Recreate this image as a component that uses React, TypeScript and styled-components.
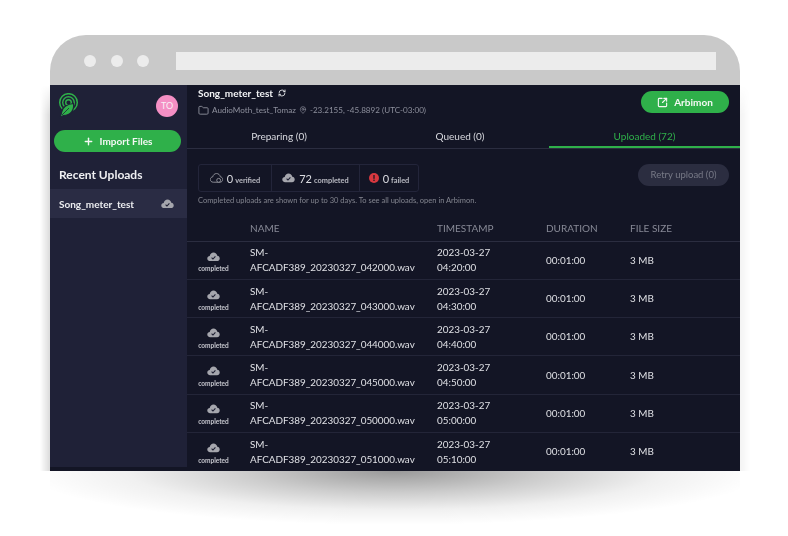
import React from 'react';
import styled, { createGlobalStyle } from 'styled-components';
import { Folder, MapPin, Plus, RefreshCw, SquareArrowOutUpRight } from 'lucide-react';

const GlobalStyle = createGlobalStyle`
  html, body {
    margin: 0;
    background: #fff;
  }
  body {
    font-family: Lato, "Liberation Sans", sans-serif;
    color: #e4e5ea;
    -webkit-font-smoothing: antialiased;
  }
`;

const Page = styled.div`
  width: 788px;
  height: 536px;
  padding: 35px 48px 0 50px;
  box-sizing: border-box;
  overflow: hidden;
`;

const Frame = styled.div`
  position: relative;
  width: 690px;
  height: 436px;

  &::before {
    content: '';
    position: absolute;
    left: -10px;
    right: -10px;
    top: 50px;
    bottom: 0;
    background: linear-gradient(to right, transparent, rgba(0, 0, 0, 0.14) 10px, rgba(0, 0, 0, 0.14) 680px, transparent);
    mask-image: linear-gradient(to bottom, transparent, #000 30px);
  }

  &::after {
    content: '';
    position: absolute;
    left: 0;
    right: 0;
    top: 100%;
    height: 54px;
    background: radial-gradient(ellipse 370px 54px at 50% 0, rgba(0, 0, 0, 0.4), rgba(0, 0, 0, 0.2) 40%, rgba(0, 0, 0, 0.06) 72%, transparent 100%);
  }
`;

const Window = styled.div`
  position: relative;
  z-index: 1;
  height: 100%;
  display: flex;
  flex-direction: column;
  will-change: opacity;
`;

const Chrome = styled.div`
  flex: 0 0 50px;
  display: flex;
  align-items: center;
  gap: 14.5px;
  padding: 2px 24px 0 34px;
  box-sizing: border-box;
  background: #c9c9c9;
  border-radius: 36px 36px 0 0;
`;

const Dot = styled.span`
  width: 12px;
  height: 12px;
  border-radius: 50%;
  background: #ececec;
`;

const Address = styled.div`
  flex: 1;
  height: 18px;
  margin-left: 12px;
  background: #ececec;
`;

const Body = styled.div`
  flex: 1;
  display: flex;
  min-height: 0;
  background: #131525;
`;

const Sidebar = styled.aside`
  flex: 0 0 137px;
  height: 382px;
  background: #1f2137;
`;

const SidebarTop = styled.div`
  display: flex;
  justify-content: space-between;
  align-items: flex-start;
  padding: 8px 9px 0 8px;
  height: 37px;
`;

const Avatar = styled.div`
  width: 22px;
  height: 22px;
  margin-top: 2px;
  border-radius: 50%;
  background: #f48fc4;
  color: #f9eef4;
  font-size: 9px;
  line-height: 22px;
  text-align: center;
`;

const ImportButton = styled.div`
  display: flex;
  align-items: center;
  justify-content: center;
  gap: 6px;
  width: 127px;
  height: 22px;
  margin: 0 0 0 4px;
  border-radius: 11px;
  background: #2fb04a;
  color: #f4f8f4;
  font-size: 10px;
  font-weight: 700;
`;

const RecentTitle = styled.div`
  margin: 14px 0 0 9px;
  font-size: 12px;
  font-weight: 700;
  line-height: 17px;
  color: #f0f0f3;
`;

const RecentRow = styled.div`
  display: flex;
  align-items: center;
  justify-content: space-between;
  height: 29px;
  margin-top: 6px;
  padding: 0 13px 0 9px;
  background: #2a2c44;
  font-size: 10px;
  font-weight: 700;
  color: #ecedf0;
`;

const Main = styled.main`
  flex: 1;
  min-width: 0;
  display: flex;
  flex-direction: column;
`;

const Header = styled.header`
  display: flex;
  justify-content: space-between;
  height: 40px;
  padding: 0 11px;
`;

const TitleBlock = styled.div`
  display: flex;
  flex-direction: column;
`;

const Title = styled.div`
  display: flex;
  align-items: center;
  gap: 5px;
  height: 16px;
  font-size: 10px;
  font-weight: 700;
  color: #f2f3f5;
`;

const Meta = styled.div`
  display: flex;
  align-items: center;
  gap: 3px;
  height: 18px;
  font-size: 8.1px;
  color: #8e909d;
`;

const ArbimonButton = styled.div`
  display: flex;
  align-items: center;
  justify-content: center;
  gap: 6px;
  width: 88px;
  height: 22px;
  margin-top: 6px;
  border-radius: 11px;
  background: #2fb04a;
  color: #f4f8f4;
  font-size: 10px;
  font-weight: 700;
`;

const Tabs = styled.nav`
  display: grid;
  grid-template-columns: 184px 178px 1fr;
  height: 25px;
  border-bottom: 1px solid #2b2d40;
`;

const Tab = styled.div<{ $active?: boolean }>`
  height: 25px;
  box-sizing: border-box;
  padding-top: 6px;
  text-align: center;
  font-size: 10px;
  line-height: 14px;
  color: ${(p) => (p.$active ? '#2fb04a' : '#d8d9df')};
  border-bottom: ${(p) => (p.$active ? '2px solid #2fb04a' : 'none')};
`;

const Toolbar = styled.div`
  display: flex;
  justify-content: space-between;
  align-items: flex-start;
  padding: 15px 11px 0;
`;

const Stats = styled.div`
  display: flex;
  height: 28px;
  border: 1px solid #23253a;
  border-radius: 3px;
  box-sizing: border-box;
`;

const Stat = styled.div<{ $width: number }>`
  display: flex;
  align-items: center;
  justify-content: center;
  gap: 4px;
  box-sizing: border-box;
  width: ${(p) => p.$width}px;

  & + & {
    border-left: 1px solid #23253a;
  }
`;

const StatText = styled.span`
  font-size: 7.4px;
  font-weight: 700;
  color: #b9bac2;
`;

const StatCount = styled.span`
  margin-right: 2px;
  font-size: 11px;
  font-weight: 400;
  color: #dcdde2;
`;

const RetryButton = styled.div`
  width: 91px;
  height: 22px;
  border-radius: 11px;
  background: #2b2d40;
  color: #777986;
  font-size: 9.5px;
  line-height: 22px;
  text-align: center;
`;

const Note = styled.div`
  margin: 3px 0 0 11px;
  font-size: 7.5px;
  line-height: 11px;
  color: #83858f;
`;

const columns = '63px 187px 109px 84px 1fr';

const TableHead = styled.div`
  display: grid;
  grid-template-columns: ${columns};
  align-items: center;
  height: 26px;
  margin-top: 10px;
  border-bottom: 1px solid #2b2d40;
  font-size: 10px;
  color: #878996;
`;

const Row = styled.div`
  display: grid;
  grid-template-columns: ${columns};
  align-items: center;
  flex: 0 0 38.2px;
  box-sizing: border-box;
  border-bottom: 1px solid #232538;
  font-size: 9.9px;
  line-height: 15px;
  color: #dfe0e5;

  &:last-child {
    border-bottom: none;
  }
`;

const StatusCell = styled.div`
  display: flex;
  flex-direction: column;
  align-items: center;
  gap: 2px;
  width: 53px;
  padding-top: 5px;
  font-size: 6.5px;
  font-weight: 700;
  line-height: 11px;
  color: #c4c5cc;
`;

const Cell = styled.div``;

const LogoMark = () => (
  <svg width="24" height="26" viewBox="0 0 24 26" fill="none">
    <g stroke="#2fb04a" fill="none">
      <circle cx="10.5" cy="9.5" r="8.8" strokeWidth="1.5" />
      <circle cx="10.5" cy="9.5" r="5.8" strokeWidth="1.4" />
      <circle cx="10.5" cy="9.5" r="2.8" strokeWidth="1.4" />
    </g>
    <path
      d="M1 25 C3 23.5 3 22 3.5 19.5 C4 14.5 9 11 15.5 10.5 C16.5 17 13 22.3 5.5 22.5 Z"
      fill="#2fb04a"
      stroke="#1f2137"
      strokeWidth="1.2"
    />
    <path d="M4 22 L11 15" stroke="#1f2137" strokeWidth="0.8" />
  </svg>
);

const CloudIcon = ({ size = 14, check = true, outline = false }: { size?: number; check?: boolean; outline?: boolean }) => (
  <svg width={size} height={size * 0.75} viewBox="0 0 24 18">
    <path
      d="M6 17 C2.5 17 0.5 14.5 0.5 12 C0.5 9.2 2.6 7.4 5 7.2 C5.8 3.4 8.6 1 12 1 C15.6 1 18.4 3.4 19 7 C21.6 7.3 23.5 9.2 23.5 12 C23.5 14.7 21.4 17 18.5 17 Z"
      fill={outline ? 'none' : '#a5a6ad'}
      stroke={outline ? '#9a9ba3' : 'none'}
      strokeWidth="1.6"
    />
    {check && !outline && <path d="M8.5 10.5 L11 13 L15.5 8" fill="none" stroke="#1b1d30" strokeWidth="2" />}
    {outline && <circle cx="16" cy="13.5" r="3.6" fill="#131525" stroke="#9a9ba3" strokeWidth="1.6" />}
  </svg>
);

const FailedIcon = () => (
  <svg width="10" height="10" viewBox="0 0 10 10">
    <circle cx="5" cy="5" r="5" fill="#d8383f" />
    <rect x="4.3" y="2" width="1.4" height="3.8" fill="#2a1a24" />
    <rect x="4.3" y="6.6" width="1.4" height="1.4" fill="#2a1a24" />
  </svg>
);

const uploads = [
  ['042000', '04:20:00'],
  ['043000', '04:30:00'],
  ['044000', '04:40:00'],
  ['045000', '04:50:00'],
  ['050000', '05:00:00'],
  ['051000', '05:10:00'],
];

export default function App() {
  return (
    <>
      <GlobalStyle />
      <Page>
        <Frame>
          <Window>
            <Chrome>
              <Dot />
              <Dot />
              <Dot />
              <Address />
            </Chrome>
            <Body>
              <Sidebar>
                <SidebarTop>
                  <LogoMark />
                  <Avatar>TO</Avatar>
                </SidebarTop>
                <ImportButton>
                  <Plus size={11} strokeWidth={3} />
                  Import Files
                </ImportButton>
                <RecentTitle>Recent Uploads</RecentTitle>
                <RecentRow>
                  Song_meter_test
                  <CloudIcon size={13} />
                </RecentRow>
              </Sidebar>
              <Main>
                <Header>
                  <TitleBlock>
                    <Title>
                      Song_meter_test
                      <RefreshCw size={8} strokeWidth={2.5} />
                    </Title>
                    <Meta>
                      <Folder size={11} />
                      <span>AudioMoth_test_Tomaz</span>
                      <MapPin size={8} />
                      <span>-23.2155, -45.8892 (UTC-03:00)</span>
                    </Meta>
                  </TitleBlock>
                  <ArbimonButton>
                    <SquareArrowOutUpRight size={11} strokeWidth={2.5} />
                    Arbimon
                  </ArbimonButton>
                </Header>
                <Tabs>
                  <Tab>Preparing (0)</Tab>
                  <Tab>Queued (0)</Tab>
                  <Tab $active>Uploaded (72)</Tab>
                </Tabs>
                <Toolbar>
                  <Stats>
                    <Stat $width={72}>
                      <CloudIcon size={13} outline />
                      <StatText>
                        <StatCount>0</StatCount>verified
                      </StatText>
                    </Stat>
                    <Stat $width={88}>
                      <CloudIcon size={13} />
                      <StatText>
                        <StatCount>72</StatCount>completed
                      </StatText>
                    </Stat>
                    <Stat $width={59}>
                      <FailedIcon />
                      <StatText>
                        <StatCount>0</StatCount>failed
                      </StatText>
                    </Stat>
                  </Stats>
                  <RetryButton>Retry upload (0)</RetryButton>
                </Toolbar>
                <Note>Completed uploads are shown for up to 30 days. To see all uploads, open in Arbimon.</Note>
                <TableHead>
                  <Cell />
                  <Cell>NAME</Cell>
                  <Cell>TIMESTAMP</Cell>
                  <Cell>DURATION</Cell>
                  <Cell>FILE SIZE</Cell>
                </TableHead>
                {uploads.map(([stamp, time]) => (
                  <Row key={stamp}>
                    <StatusCell>
                      <CloudIcon size={13} />
                      completed
                    </StatusCell>
                    <Cell>
                      SM-
                      <br />
                      AFCADF389_20230327_{stamp}.wav
                    </Cell>
                    <Cell>
                      2023-03-27
                      <br />
                      {time}
                    </Cell>
                    <Cell>00:01:00</Cell>
                    <Cell>3 MB</Cell>
                  </Row>
                ))}
              </Main>
            </Body>
          </Window>
        </Frame>
      </Page>
    </>
  );
}
